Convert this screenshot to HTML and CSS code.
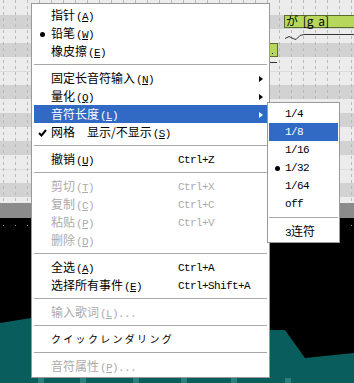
FILE: index.html
```html
<!DOCTYPE html>
<html lang="zh-CN">
<head>
  <meta charset="UTF-8" />
  <title>音符编辑菜单</title>
  <link rel="stylesheet" href="styles.css">
</head>
<body>
  <div class="screen">
    <!-- piano roll behind the popup -->
    <svg class="roll" width="354" height="383" viewBox="0 0 354 383">
      <defs>
        <pattern id="dash" x="3" y="0" width="12" height="6" patternUnits="userSpaceOnUse">
          <rect x="0" y="0" width="1" height="3" fill="#b9b9b9" />
        </pattern>
        <pattern id="tick" x="3" y="0" width="12" height="20" patternUnits="userSpaceOnUse">
          <rect x="0" y="0" width="1" height="6" fill="#8a9c9c" />
        </pattern>
      </defs>
      <rect x="0" y="0" width="354" height="203" fill="#ececec" />
      <rect x="0" y="15" width="354" height="14" fill="#d2d2d2" />
      <rect x="0" y="43" width="354" height="14" fill="#d2d2d2" />
      <rect x="0" y="85" width="354" height="14" fill="#d2d2d2" />
      <rect x="0" y="113" width="354" height="14" fill="#d2d2d2" />
      <rect x="0" y="141" width="354" height="14" fill="#d2d2d2" />
      <rect x="0" y="183" width="354" height="14" fill="#d2d2d2" />
      <rect x="0" y="71" width="354" height="1" fill="#dcdcdc" />
      <rect x="0" y="169" width="354" height="1" fill="#dcdcdc" />
      <rect x="0" y="0" width="354" height="203" fill="url(#dash)" />
      <rect x="0" y="203" width="354" height="15" fill="#8b8b8b" />
      <rect x="0" y="218" width="354" height="165" fill="#000" />
      <rect x="0" y="225" width="354" height="6" fill="url(#tick)" />
      <polygon points="0,323 31,318 269,330 285,330 305,358 354,353 354,383 0,383" fill="#0a5d5d" />
      <rect x="0" y="327" width="354" height="6" fill="url(#tick)" />
      <rect x="38" y="378" width="6" height="5" fill="#2a7f7f" />
      <rect x="80" y="378" width="6" height="5" fill="#2a7f7f" />
      <rect x="133" y="378" width="6" height="5" fill="#2a7f7f" />
      <rect x="181" y="378" width="6" height="5" fill="#2a7f7f" />
      <rect x="231" y="378" width="6" height="5" fill="#2a7f7f" />
      <rect x="285" y="378" width="6" height="5" fill="#2a7f7f" />
      <!-- notes -->
      <rect x="269.5" y="43.5" width="8" height="13" fill="#b6d65c" stroke="#5b6b2a" />
      <rect x="272" y="53" width="1" height="1" fill="#000" />
      <rect x="269" y="62" width="8" height="1" fill="#333" />
      <rect x="284.5" y="15.5" width="80" height="12" fill="#b6d65c" stroke="#5b6b2a" />
      <text x="286" y="26" class="lyric">が [g a]</text>
      <path d="M285 38.5 L289 36.5 L293 38.5 L296 39.5 L300 35.5 L304 34.5 L354 34.5" fill="none" stroke="#333" />
    </svg>

    <div class="menu main">
      <div class="item"><span></span><span>指针<span class="key">(<u>A</u>)</span></span></div>
      <div class="item"><span class="dot"></span><span>铅笔<span class="key">(<u>W</u>)</span></span></div>
      <div class="item"><span></span><span>橡皮擦<span class="key">(<u>E</u>)</span></span></div>
      <div class="sep"></div>
      <div class="item"><span></span><span>固定长音符输入<span class="key">(<u>N</u>)</span></span><span></span><span class="arrow"></span></div>
      <div class="item"><span></span><span>量化<span class="key">(<u>Q</u>)</span></span><span></span><span class="arrow"></span></div>
      <div class="item on"><span></span><span>音符长度<span class="key">(<u>L</u>)</span></span><span></span><span class="arrow"></span></div>
      <div class="item">
        <svg class="check" width="9" height="8" viewBox="0 0 9 8"><path d="M1 4 L3.5 6.5 L8 1" fill="none" stroke="#000" stroke-width="2" /></svg>
        <span>网格<span class="gap">显示/不显示</span><span class="key">(<u>S</u>)</span></span>
      </div>
      <div class="sep"></div>
      <div class="item"><span></span><span>撤销<span class="key">(<u>U</u>)</span></span><span class="mono">Ctrl+Z</span></div>
      <div class="sep"></div>
      <div class="item off"><span></span><span>剪切<span class="key">(<u>T</u>)</span></span><span class="mono">Ctrl+X</span></div>
      <div class="item off"><span></span><span>复制<span class="key">(<u>C</u>)</span></span><span class="mono">Ctrl+C</span></div>
      <div class="item off"><span></span><span>粘贴<span class="key">(<u>P</u>)</span></span><span class="mono">Ctrl+V</span></div>
      <div class="item off"><span></span><span>删除<span class="key">(<u>D</u>)</span></span></div>
      <div class="sep"></div>
      <div class="item"><span></span><span>全选<span class="key">(<u>A</u>)</span></span><span class="mono">Ctrl+A</span></div>
      <div class="item"><span></span><span>选择所有事件<span class="key">(<u>E</u>)</span></span><span class="mono">Ctrl+Shift+A</span></div>
      <div class="sep"></div>
      <div class="item off"><span></span><span>输入歌词<span class="key">(<u>L</u>)...</span></span></div>
      <div class="sep"></div>
      <div class="item"><span></span><span class="kana">クイックレンダリング</span></div>
      <div class="sep"></div>
      <div class="item off"><span></span><span>音符属性<span class="key">(<u>P</u>)...</span></span></div>
    </div>

    <div class="menu sub">
      <div class="item"><span></span><span class="mono">1/4</span></div>
      <div class="item on"><span></span><span class="mono">1/8</span></div>
      <div class="item"><span></span><span class="mono">1/16</span></div>
      <div class="item"><span class="dot"></span><span class="mono">1/32</span></div>
      <div class="item"><span></span><span class="mono">1/64</span></div>
      <div class="item"><span></span><span class="mono">off</span></div>
      <div class="sep"></div>
      <div class="item"><span></span><span><span class="mono">3</span>连符</span></div>
    </div>
  </div>
</body>
</html>
```

FILE: styles.css
```css
body {
  margin: 0;
  font-family: "Noto Sans CJK SC", "Noto Sans", sans-serif;
}
.screen {
  position: relative;
  width: 354px;
  height: 383px;
  overflow: hidden;
  background: #000;
}
.roll {
  display: block;
}
.lyric {
  font-family: "Noto Sans CJK JP", sans-serif;
  font-size: 12px;
  white-space: pre;
  word-spacing: 2px;
  fill: #000;
}

/* popup menus */
.menu {
  position: absolute;
  box-sizing: border-box;
  background: #fff;
  border: 1px solid #999;
  padding: 2px;
  font-size: 12px;
  color: #000;
}
.main {
  left: 31px;
  top: 3px;
  width: 239px;
}
.sub {
  left: 267px;
  top: 102px;
  width: 73px;
  padding: 2px 1px;
}
.item {
  display: grid;
  grid-template-columns: 17px 127px 1fr 12px;
  align-items: center;
  height: 18px;
  line-height: 18px;
  white-space: nowrap;
}
.sub .item {
  grid-template-columns: 16px 1fr;
}
.item.on {
  background: #316ac5;
  color: #fff;
}
.item.off {
  color: #ababab;
}
.sep {
  height: 1px;
  margin: 4px 0;
  background: #a8a8a8;
}
.key,
.mono {
  font-family: "Liberation Mono", monospace;
  font-size: 11px;
  letter-spacing: -0.6px;
}
.key {
  margin-left: 1px;
}
.gap {
  margin-left: 12px;
}
.kana {
  font-family: "Noto Sans CJK JP", sans-serif;
  font-size: 10px;
  letter-spacing: 2.3px;
}
.dot {
  justify-self: center;
  width: 5px;
  height: 5px;
  border-radius: 50%;
  background: #000;
}
.check {
  justify-self: center;
}
.arrow {
  justify-self: start;
  margin-left: 4px;
  width: 0;
  height: 0;
  border-left: 4px solid #000;
  border-top: 3.5px solid transparent;
  border-bottom: 3.5px solid transparent;
}
.on .arrow {
  border-left-color: #fff;
}
```
